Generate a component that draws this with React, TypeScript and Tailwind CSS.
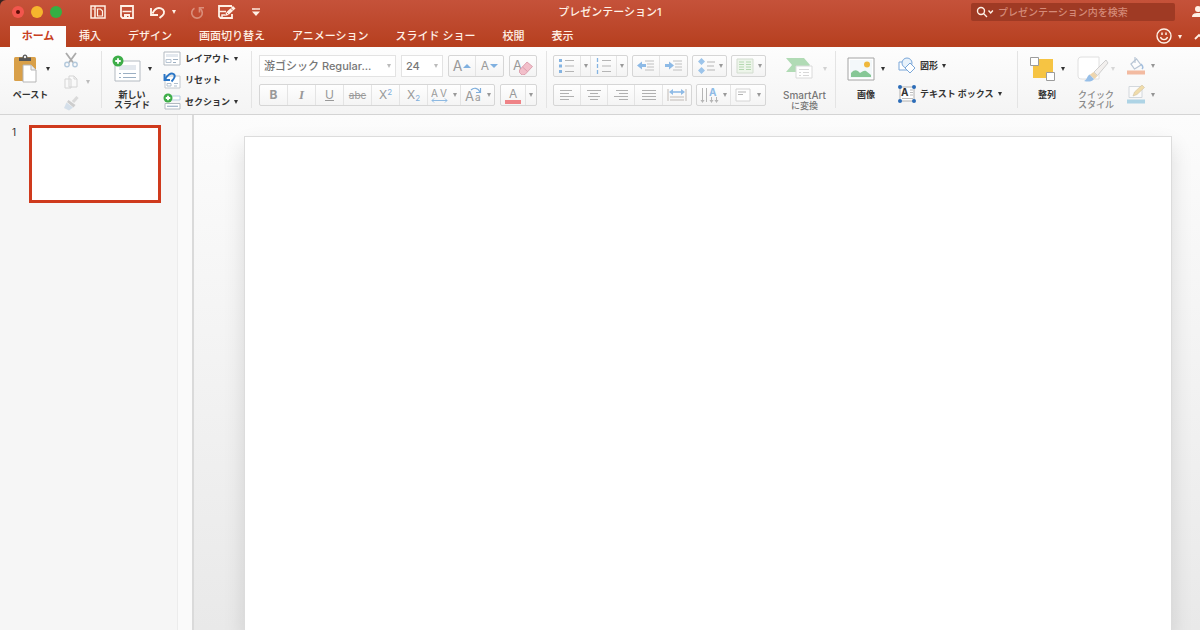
import type { ReactNode } from 'react';
import clsx from 'clsx';

const TABS = ['ホーム', '挿入', 'デザイン', '画面切り替え', 'アニメーション', 'スライド ショー', '校閲', '表示'];

export default function App() {
  return (
    <div className="min-h-screen flex flex-col overflow-hidden bg-[#3a2420] font-['Inter','Noto_Sans_CJK_JP',sans-serif] text-[#333]">
      <header className="rounded-tl-md overflow-hidden bg-linear-to-b from-[#c5523a] to-[#b63f1e]">
        <TitleBar />
        <TabBar />
      </header>
      <Ribbon />
      <main className="flex-1 flex">
        <SlideList />
        <div className="w-[17px] shrink-0 border-l border-r-2 border-l-[#ececec] border-r-[#dadada] bg-[#fafafa]" />
        <section
          aria-label="スライド"
          className="flex-1 flex pl-[50px] pr-7 pt-[21px] bg-linear-to-b from-[#fcfcfc] to-[#e9e9e9] overflow-hidden"
        >
          <div className="flex-1 bg-white border border-b-0 border-[#dcdcdc] shadow-[0_10px_20px_rgba(0,0,0,0.12)]" />
        </section>
      </main>
    </div>
  );
}

function TitleBar() {
  return (
    <div className="grid grid-cols-[1fr_auto_1fr] items-center h-6 pl-3 text-[#fff1e6]">
      <div className="flex items-center">
        <div className="flex gap-[7px]">
          <button aria-label="閉じる" className="size-3 rounded-full bg-[#f2564d] flex items-center justify-center">
            <span className="size-1 rounded-full bg-[#5c0d08]" />
          </button>
          <button aria-label="しまう" className="size-3 rounded-full bg-[#f6b62d]" />
          <button aria-label="拡大" className="size-3 rounded-full bg-[#35b043]" />
        </div>
        <div className="flex items-center ml-7">
          <button aria-label="テンプレート">
            <Icon w={16} h={16}>
              <path d="M1 2h14v12H1zM5 2v12" fill="none" stroke="currentColor" strokeWidth="1.500" />
              <path d="M7.500 5h3l2 2v5h-5z" fill="none" stroke="currentColor" strokeWidth="1.200" />
              <path d="M2.500 5h1.500" stroke="currentColor" strokeWidth="1.200" />
            </Icon>
          </button>
          <button aria-label="保存" className="ml-[14px]">
            <Icon w={14} h={14}>
              <path d="M1 1h12v12H2.500L1 11.500z" fill="none" stroke="currentColor" strokeWidth="1.800" />
              <path d="M2.500 6.500h9" fill="none" stroke="currentColor" strokeWidth="1.600" />
              <path d="M4 9h6v4H8.500v-2H7v2H4z" fill="currentColor" />
            </Icon>
          </button>
          <button aria-label="元に戻す" className="ml-4">
            <Icon w={16} h={14}>
              <path d="M2.500 8.500C4.500 4 8 2.400 11 3.300c3.500 1.200 4 5 1.500 7.200L9.500 13" fill="none" stroke="currentColor" strokeWidth="1.900" />
              <path d="M1 3v7h7" fill="none" stroke="currentColor" strokeWidth="1.900" />
            </Icon>
          </button>
          <button aria-label="元に戻すの履歴" className="ml-[6px] flex">
            <Caret />
          </button>
          <button aria-label="繰り返す" className="ml-[14px] opacity-40">
            <Icon w={14} h={16}>
              <path d="M4.500 4.200a5.300 5.300 0 1 0 5.500.3" fill="none" stroke="currentColor" strokeWidth="1.600" />
              <path d="M14 3.800H9.500V8.500" fill="none" stroke="currentColor" strokeWidth="1.600" />
            </Icon>
          </button>
          <button aria-label="名前を付けて保存" className="ml-[14px]">
            <Icon w={18} h={16}>
              <path d="M14 10v4H2.500L1 12.500V2h13" fill="none" stroke="currentColor" strokeWidth="1.800" />
              <path d="M1 7.500h7M4 14v-3h3" fill="none" stroke="currentColor" strokeWidth="1.500" />
              <path d="m7 12 1-3.500L15 2l2.500 2.500L10.500 11z" fill="currentColor" />
              <path d="m12.500 4 2.500 2.500M8.500 8.500l2 2" stroke="#c04a30" strokeWidth="0.800" />
            </Icon>
          </button>
          <button aria-label="クイック アクセスのカスタマイズ" className="ml-4">
            <Icon w={8} h={8}>
              <path d="M0 1h8" stroke="currentColor" strokeWidth="1.400" />
              <path d="M0 3.500h8L4 8z" fill="currentColor" />
            </Icon>
          </button>
        </div>
      </div>
      <h1 className="pl-2 text-[11px] font-medium whitespace-nowrap">プレゼンテーション1</h1>
      <div className="flex items-center justify-end gap-4 -mr-2">
        <div className="flex items-center w-[204px] h-[18px] pl-1 rounded-xs bg-[#9f3a24]">
          <Icon w={20} h={12}>
            <circle cx="6" cy="5" r="3.500" fill="none" stroke="currentColor" strokeWidth="1.400" />
            <path d="m8.500 7.500 3.500 3.500M13.500 4.500 15.700 7l2.200-2.500" fill="none" stroke="currentColor" strokeWidth="1.400" />
          </Icon>
          <input
            type="search"
            aria-label="検索"
            placeholder="プレゼンテーション内を検索"
            className="flex-1 min-w-0 pl-[3px] bg-transparent outline-none text-[10px] font-medium placeholder:text-[#d58a78]"
          />
        </div>
        <button aria-label="共有" className="-mr-[1px]">
          <Icon w={18} h={14}>
            <circle cx="7" cy="4" r="3" fill="currentColor" />
            <path d="M1 12c0-3.500 3-4 6-4s6 .5 6 4z" fill="currentColor" />
          </Icon>
        </button>
      </div>
    </div>
  );
}

function TabBar() {
  return (
    <nav className="flex items-end h-[23px] pl-[10px] text-[11px] font-medium text-[#fff1e6] leading-[21px]">
      {TABS.map((tab, i) => (
        <button
          key={tab}
          className={clsx('h-[21px] whitespace-nowrap', i === 0 ? 'w-14 mr-[13px] bg-[#fdfdfd] text-[#c8401f] font-bold' : 'mr-[27px]')}
        >
          {tab}
        </button>
      ))}
      <button aria-label="フィードバック" className="ml-auto flex items-center gap-[5px] h-[21px]">
        <Icon w={18} h={18}>
          <circle cx="9" cy="8" r="7" fill="none" stroke="currentColor" strokeWidth="1.400" />
          <path d="M5.500 9c.8 3.400 6.200 3.400 7 0" fill="none" stroke="currentColor" strokeWidth="1.300" />
          <path d="M7 4.500v2.500M11 4.500v2.500" stroke="currentColor" strokeWidth="1.500" />
        </Icon>
        <Caret />
      </button>
      <button aria-label="リボンを折りたたむ" className="ml-3 -mr-1 h-[21px] flex items-center">
        <Icon w={10} h={8}>
          <path d="m1 6 4-4 4 4" fill="none" stroke="currentColor" strokeWidth="1.800" />
        </Icon>
      </button>
    </nav>
  );
}

function Ribbon() {
  return (
    <div className="flex items-stretch h-[68px] bg-linear-to-b from-[#fdfdfd] to-[#f4f4f4] border-b border-[#d4d4d4] text-[9px] font-bold leading-[10px] whitespace-nowrap">
      <Group className="w-[102px] pl-[11px]">
        <BigButton label="ペースト" icon={<PasteIcon />} className="w-[39px]" />
        <div className="flex flex-col gap-[6px] pt-[5px] ml-[13px] opacity-60">
          <button aria-label="切り取り"><CutIcon /></button>
          <button aria-label="コピー" className="flex items-center gap-[7px] opacity-50">
            <Icon w={16} h={16}>
              <path d="M2 5h6v9H2zM6 2h5l3 3v8H6z" fill="#fff" stroke="#888" />
              <path d="M11 2v3h3" fill="none" stroke="#888" />
            </Icon>
            <Caret />
          </button>
          <button aria-label="書式のコピー" className="opacity-70">
            <Icon w={16} h={15}>
              <path d="M14.500 1 10 6" stroke="#b5b5b5" strokeWidth="3" />
              <path d="m5.500 4 7 5-2 2.500L4 6z" fill="#999" />
              <path d="M3.500 6.500 10 11.500 6 14.500 1 12z" fill="#a9c4dc" />
            </Icon>
          </button>
        </div>
      </Group>

      <Group className="w-[150px] pl-[10px]">
        <BigButton label={<>新しい<br />スライド</>} icon={<NewSlideIcon />} className="w-10" />
        <div className="flex flex-col justify-between pt-1 pb-1 ml-[11px]">
          <RowButton label="レイアウト" icon={<LayoutIcon />} caret />
          <RowButton label="リセット" icon={<ResetIcon />} />
          <RowButton label="セクション" icon={<SectionIcon />} caret />
        </div>
      </Group>

      <Group className="w-[295px] pl-[7px]">
        <div className="flex flex-col gap-[7px] pt-2 text-[#999] font-normal">
          <div className="flex gap-[5px]">
            <Picker label="フォント" value="游ゴシック Regular..." className="w-[137px]" />
            <Picker label="フォント サイズ" value="24" className="w-[42px]" />
            <Cells>
              <Cell label="フォント サイズの拡大" className="w-[27px] gap-[1px]"><span className="text-[14px]">A</span><Tri up /></Cell>
              <Cell label="フォント サイズの縮小" className="w-[27px] gap-[1px]"><span className="text-[12px]">A</span><Tri /></Cell>
            </Cells>
            <Cells>
              <Cell label="書式のクリア" className="w-[26px]">
                <Icon w={22} h={18}>
                  <text x="1" y="13" fontSize="13" fill="#999">A</text>
                  <path d="m7.500 13 7.500-8 5.500 4.500-7.500 8-3 .5-2.500-2.500z" fill="#f2bfca" stroke="#d794a4" strokeWidth="0.800" />
                  <path d="m10.500 10 5 4.500" stroke="#d794a4" strokeWidth="0.800" />
                </Icon>
              </Cell>
            </Cells>
          </div>
          <div className="flex gap-[5px] text-[12px]">
            <Cells>
              <Cell label="太字"><span className="font-bold">B</span></Cell>
              <Cell label="斜体"><span className="font-['Liberation_Serif',serif] font-bold italic text-[13px]">I</span></Cell>
              <Cell label="下線"><span className="underline">U</span></Cell>
              <Cell label="取り消し線"><span className="line-through text-[10px]">abc</span></Cell>
              <Cell label="上付き"><span>X<sup className="text-[8px] text-[#7eaedc]">2</sup></span></Cell>
              <Cell label="下付き"><span>X<sub className="text-[8px] text-[#7eaedc]">2</sub></span></Cell>
              <Cell label="文字の間隔" className="w-[33px]">
                <Icon w={18} h={16}>
                  <text x="0" y="10" fontSize="10" fill="#999">A</text>
                  <text x="9" y="10" fontSize="10" fill="#999">V</text>
                  <path d="M1 13.500h15M3 11.500l-2 2 2 2M14 11.500l2 2-2 2" fill="none" stroke="#8db9e2" />
                </Icon>
                <Caret className="ml-1" />
              </Cell>
              <Cell label="文字種の変換" className="w-[33px]">
                <Icon w={18} h={18}>
                  <text x="0" y="15" fontSize="13" fill="#999">A</text>
                  <text x="10" y="15" fontSize="10" fill="#999">a</text>
                  <path d="M6 4c3-3 7-2 9 2M15.500 2v4.500H11" fill="none" stroke="#7eaedc" strokeWidth="1.200" />
                </Icon>
                <Caret className="ml-1" />
              </Cell>
            </Cells>
            <Cells>
              <Cell label="フォントの色" className="w-[25px]">
                <Icon w={18} h={20}>
                  <text x="5" y="13" fontSize="12" fill="#999">A</text>
                  <path d="M1 15h16v4H1z" fill="#ef8387" />
                </Icon>
              </Cell>
              <Cell label="フォントの色の一覧" className="w-[10px]"><Caret /></Cell>
            </Cells>
          </div>
        </div>
      </Group>

      <Group className="w-[289px] pl-[6px]">
        <div className="flex flex-col gap-[7px] pt-2 text-[#999] font-normal">
          <div className="flex gap-1">
            <Cells>
              <Cell label="箇条書き" className="w-[27px]"><ListIcon dots /></Cell>
              <Cell label="箇条書きの一覧" className="w-[10px]"><Caret /></Cell>
              <Cell label="段落番号" className="w-[26px]"><ListIcon /></Cell>
              <Cell label="段落番号の一覧" className="w-[10px]"><Caret /></Cell>
            </Cells>
            <Cells>
              <Cell label="インデントを減らす" className="w-[27px]"><IndentIcon left /></Cell>
              <Cell label="インデントを増やす" className="w-[27px]"><IndentIcon /></Cell>
            </Cells>
            <Cells>
              <Cell label="行間" className="w-[33px]">
                <Icon w={18} h={16}>
                  <path d="m4.500 0 3.500 3.500L4.500 7 1 3.500zM4.500 9 8 12.500 4.500 16 1 12.500z" fill="#9cc4ea" />
                  <path d="M10 4h8M10 8h7M10 12h8" stroke="#b5b5b5" />
                </Icon>
                <Caret className="ml-1" />
              </Cell>
            </Cells>
            <Cells>
              <Cell label="段組み" className="w-[33px]">
                <Icon w={18} h={16}>
                  <path d="M1 1h16v14H1z" fill="#edf5ea" stroke="#d3ddd0" />
                  <path d="M3 4h5M3 6.500h5M3 9h5M3 11.500h5M10 4h5M10 6.500h5M10 9h5M10 11.500h5" stroke="#b5d8b0" />
                </Icon>
                <Caret className="ml-1" />
              </Cell>
            </Cells>
          </div>
          <div className="flex gap-1">
            <Cells>
              <Cell label="左揃え" className="w-[27px]"><AlignIcon d="M1 2h12M1 5h9M1 8h14M1 11h9" /></Cell>
              <Cell label="中央揃え" className="w-[27px]"><AlignIcon d="M1 2h14M4 5h8M2 8h12M4 11h8" /></Cell>
              <Cell label="右揃え" className="w-[27px]"><AlignIcon d="M3 2h12M6 5h9M1 8h14M6 11h9" /></Cell>
              <Cell label="両端揃え"><AlignIcon d="M1 2h14M1 5h14M1 8h14M1 11h14" /></Cell>
              <Cell label="均等割り付け">
                <Icon w={20} h={16}>
                  <path d="M1 2v12M19 2v12M3 10h14M3 13h14" stroke="#c0bab5" />
                  <path d="M5 5h10" stroke="#8fbbe6" strokeWidth="1.600" />
                  <path d="m2 5 4-3v6zM18 5l-4-3v6z" fill="#8fbbe6" />
                </Icon>
              </Cell>
            </Cells>
            <Cells>
              <Cell label="文字列の方向" className="w-[34px]">
                <Icon w={20} h={18}>
                  <path d="M2.500 2v14M6.500 2v14M11.500 11v5M16.500 11v5" stroke="#b5b5b5" />
                  <path d="m.5 14 2 3 2-3zM9.500 14l2 3 2-3zM14.500 14l2 3 2-3z" fill="#b5b5b5" />
                  <text x="9" y="10" fontSize="10" fontWeight="bold" fill="#8fbbe6">A</text>
                </Icon>
                <Caret className="ml-[3px]" />
              </Cell>
              <Cell label="文字の配置" className="w-[34px]">
                <Icon w={16} h={14}>
                  <path d="M1 1h14v12H1z" fill="#fff" stroke="#d4d4d4" />
                  <path d="M3 4h8M3 6.500h5" stroke="#b5b5b5" />
                </Icon>
                <Caret className="ml-[6px]" />
              </Cell>
            </Cells>
          </div>
        </div>
        <BigButton
          label={<><span className="text-[10px]">SmartArt</span><br />に変換</>}
          icon={<SmartArtIcon />}
          className="w-[45px] ml-4 text-[#777] font-medium"
          faded
        />
      </Group>

      <Group className="w-[182px] pl-[11px]">
        <BigButton label="画像" icon={<PictureIcon />} className="w-[38px]" />
        <div className="flex flex-col gap-[11px] pt-[10px] ml-[13px]">
          <RowButton label="図形" icon={<ShapesIcon />} caret />
          <RowButton label="テキスト ボックス" icon={<TextBoxIcon />} caret />
        </div>
      </Group>

      <div className="flex pl-[11px]">
        <BigButton label="整列" icon={<ArrangeIcon />} className="w-9" />
        <BigButton
          label={<>クイック<br />スタイル</>}
          icon={<QuickStyleIcon />}
          className="w-[38px] ml-3 text-[#888] font-medium"
          faded
        />
        <div className="flex flex-col gap-[9px] pt-[9px] ml-3 opacity-50">
          <button aria-label="図形の塗りつぶし" className="flex items-center gap-[6px]">
            <Icon w={18} h={20}>
              <path d="m4 8 5.500-5L14 9l-6.500 4z" fill="#fff" stroke="#7792b0" strokeWidth="1.200" />
              <path d="M8 1v6" stroke="#7792b0" strokeWidth="1.200" />
              <path d="M14 8c2 2 2 4 1 5" stroke="#4c84c4" strokeWidth="1.500" fill="none" />
              <path d="M0 14.500h18v4H0z" fill="#ed7d4b" />
            </Icon>
            <Caret />
          </button>
          <button aria-label="図形の枠線" className="flex items-center gap-[6px]">
            <Icon w={18} h={20}>
              <path d="M2 1.500h13v11H2z" fill="#fff" stroke="#b0bac4" />
              <path d="m6 11 1.500-4L15 0l2.500 2.500-7.500 7z" fill="#ebc25f" stroke="#a98f52" strokeWidth="0.600" />
              <path d="M0 14.500h18v4H0z" fill="#69b3d6" />
            </Icon>
            <Caret />
          </button>
        </div>
      </div>
    </div>
  );
}

function SlideList() {
  return (
    <aside className="flex items-start w-[177px] shrink-0 pl-3 pt-[10px] bg-[#f6f6f6]">
      <span className="w-[17px] pt-[1px] text-[10px] leading-3">1</span>
      <button aria-label="スライド 1" className="w-[132px] h-[78px] border-[3px] border-[#cf3a1d] bg-white" />
    </aside>
  );
}

function Group({ className, children }: { className?: string; children: ReactNode }) {
  return (
    <div className={clsx('flex shrink-0', className)}>
      {children}
      <div className="w-px ml-auto mt-1 mb-[6px] bg-[#e4e4e4]" />
    </div>
  );
}

function BigButton({
  label,
  icon,
  className,
  faded
}: {
  label: ReactNode;
  icon: ReactNode;
  className?: string;
  faded?: boolean;
}) {
  return (
    <button className={clsx('flex flex-col items-center pt-[6px] shrink-0', className)}>
      <span className="flex items-center justify-between w-full h-8">
        {icon}
        <Caret className={faded ? 'opacity-30' : undefined} />
      </span>
      <span className="pt-[5px] w-full text-center">{label}</span>
    </button>
  );
}

function RowButton({ label, icon, caret }: { label: string; icon: ReactNode; caret?: boolean }) {
  return (
    <button className="flex items-center gap-1">
      {icon}
      <span>{label}</span>
      {caret && <Caret />}
    </button>
  );
}

function Picker({ label, value, className }: { label: string; value: string; className?: string }) {
  return (
    <div className={clsx('relative flex h-[22px] border border-[#e3e3e3] bg-white', className)}>
      <select
        aria-label={label}
        className="w-full pl-1 appearance-none bg-transparent text-[11px] leading-5 font-medium text-[#777]"
      >
        <option>{value}</option>
      </select>
      <Caret className="absolute right-1 top-2 text-[#bbb]" />
    </div>
  );
}

function Cells({ children }: { children: ReactNode }) {
  return (
    <div className="flex h-[22px] rounded-xs border border-[#d6d6d6] bg-linear-to-b from-[#fefefe] to-[#f4f4f4] divide-x divide-[#e4e4e4]">
      {children}
    </div>
  );
}

function Cell({ label, className, children }: { label: string; className?: string; children: ReactNode }) {
  return (
    <button aria-label={label} className={clsx('flex items-center justify-center', className ?? 'w-[28px]')}>
      {children}
    </button>
  );
}

function Caret({ className }: { className?: string }) {
  return (
    <svg width="4" height="4" viewBox="0 0 4 4" className={clsx('shrink-0', className)}>
      <path d="M0 0h4L2 4z" fill="currentColor" />
    </svg>
  );
}

function Tri({ up }: { up?: boolean }) {
  return (
    <svg width="8" height="4" viewBox="0 0 8 4" className="shrink-0">
      <path d={up ? 'M0 4h8L4 0z' : 'M0 0h8L4 4z'} fill="#7fb0e0" />
    </svg>
  );
}

function Icon({ w, h, children }: { w: number; h: number; children: ReactNode }) {
  return (
    <svg width={w} height={h} viewBox={`0 0 ${w} ${h}`} className="shrink-0">
      {children}
    </svg>
  );
}

function PasteIcon() {
  return (
    <Icon w={28} h={30}>
      <rect x="3" y="3" width="22" height="24" rx="1.500" fill="#d9a049" />
      <path d="M8 7V3.500h3.500c0-4 5-4 5 0H20V7z" fill="#565656" />
      <circle cx="14" cy="3" r="1.200" fill="#eee" />
      <path d="M12 11h8l5 5v12H12z" fill="#fff" stroke="#b5b5b5" />
      <path d="M20 11v5h5" fill="#eee" stroke="#b5b5b5" />
    </Icon>
  );
}

function CutIcon() {
  return (
    <Icon w={16} h={16}>
      <path d="m3 1 7 9.500M13 1 6 10.500" stroke="#777" strokeWidth="1.800" />
      <circle cx="4" cy="12.500" r="2.200" fill="none" stroke="#86a9c9" strokeWidth="1.400" />
      <circle cx="12" cy="12.500" r="2.200" fill="none" stroke="#86a9c9" strokeWidth="1.400" />
    </Icon>
  );
}

function PlusBadge({ x, y, r }: { x: number; y: number; r: number }) {
  return (
    <>
      <circle cx={x} cy={y} r={r} fill="#3eae49" />
      <path d={`M${x - r / 2} ${y}h${r}M${x} ${y - r / 2}v${r}`} stroke="#fff" strokeWidth="1.800" />
    </>
  );
}

function NewSlideIcon() {
  return (
    <Icon w={29} h={28}>
      <path d="M3 6h25v20H3z" fill="#fff" stroke="#b3bac1" />
      <path d="M7 10h17v5H7z" fill="#e3e8ee" />
      <path d="M7 18.500h2M11 18.500h13M7 22.500h2M11 22.500h13" stroke="#9bafc3" strokeWidth="1.200" />
      <PlusBadge x={6} y={6} r={5.5} />
    </Icon>
  );
}

function LayoutIcon() {
  return (
    <Icon w={18} h={15}>
      <path d="M1 1h16v13H1z" fill="#fff" stroke="#b3bac1" />
      <path d="M3 3h12v3H3z" fill="#e3e8ee" />
      <path d="M3 8.500h5v3H3z" fill="none" stroke="#b5c3d2" />
      <path d="M10 8.500h5M10 11.500h3" stroke="#9fb0c2" />
    </Icon>
  );
}

function ResetIcon() {
  return (
    <Icon w={18} h={18}>
      <path d="M2 5h15v12H2z" fill="#fff" stroke="#c2c8ce" />
      <path d="M4 12.500h4v2.500H4zM11 12.500h4M11 15h3" stroke="#b0bfce" fill="none" />
      <path d="M2 8.500c2-4.500 6-7 8.500-5.500 2.600 1.700.7 4.500-2 7.500" fill="none" stroke="#2a76c6" strokeWidth="1.900" />
      <path d="M1.500 3v6H7" fill="none" stroke="#2a76c6" strokeWidth="1.900" />
    </Icon>
  );
}

function SectionIcon() {
  return (
    <Icon w={18} h={17}>
      <path d="M8 3h9v4H8z" fill="#fff" stroke="#b9cde2" />
      <path d="M2 10.500h15v5.500H2z" fill="#fff" stroke="#b3bac1" />
      <path d="M4 13.300h11" stroke="#a5b8cc" strokeWidth="1.300" />
      <PlusBadge x={5} y={5} r={4.5} />
    </Icon>
  );
}

function ListIcon({ dots }: { dots?: boolean }) {
  return (
    <Icon w={18} h={16}>
      {dots ? (
        <path d="M1 1h3v3H1zM1 6.500h3v3H1zM1 12h3v3H1z" fill="#85b4e2" />
      ) : (
        <path d="M2.500 0v4M2.500 6v4M2.500 12v4" stroke="#85b4e2" strokeWidth="1.300" />
      )}
      <path d="M7 2.500h9M7 8h9M7 13.500h9" stroke="#b5b5b5" />
    </Icon>
  );
}

function IndentIcon({ left }: { left?: boolean }) {
  return (
    <Icon w={18} h={14}>
      <path d="M8 2h9M10 5h7M10 8h7M8 11h9" stroke="#c0c0c0" />
      <path d={left ? 'M0 6.500 5 2.500v2.500h4v3H5v2.500z' : 'M9 6.500 4 2.500v2.500H0v3h4v2.500z'} fill="#8dbae6" />
    </Icon>
  );
}

function AlignIcon({ d }: { d: string }) {
  return (
    <Icon w={16} h={14}>
      <g transform="translate(0 .5)">
        <path d={d} stroke="#b0b0b0" />
      </g>
    </Icon>
  );
}

function SmartArtIcon() {
  return (
    <Icon w={32} h={24}>
      <path d="M4 1h18l6 7-6 7H4l6-7z" fill="#b1dbb5" />
      <path d="M14 9h16v12H14z" fill="#fff" stroke="#dadada" />
      <path d="M17 12.500h10M17 15.500h2M21 15.500h6M17 18.500h2M21 18.500h6" stroke="#d8d8d8" />
    </Icon>
  );
}

function PictureIcon() {
  return (
    <Icon w={28} h={24}>
      <path d="M1 1h26v22H1z" fill="#fff" stroke="#a4a4a4" />
      <path d="M3 3h22v18H3z" fill="#f3f8fa" />
      <circle cx="20" cy="7.500" r="3" fill="#efb83c" />
      <path d="M4 20v-4c4-4 6-3 9 0 2-1 4-3 6-2l5 4v2z" fill="#86c796" />
    </Icon>
  );
}

function ShapesIcon() {
  return (
    <Icon w={18} h={17}>
      <path d="M1 5h9v8H1z" fill="#fff" stroke="#7aa7d9" />
      <circle cx="9" cy="6" r="5" fill="#e8f2fb" stroke="#7aa7d9" />
      <path d="m12 6 5 5-5 5-5-5z" fill="#fff" stroke="#7aa7d9" />
    </Icon>
  );
}

function TextBoxIcon() {
  return (
    <Icon w={18} h={18}>
      <path d="M2 2h14v14H2z" fill="#fff" stroke="#b0b0b0" />
      <text x="3" y="11" fontSize="10" fontWeight="bold" fill="#333">A</text>
      <path d="M12 5h3M12 7.500h3M12 10h3M4 13.500h11" stroke="#bbb" />
      <circle cx="2" cy="2" r="2" fill="#2b6cb8" />
      <circle cx="16" cy="2" r="2" fill="#2b6cb8" />
      <circle cx="2" cy="16" r="2" fill="#2b6cb8" />
      <circle cx="16" cy="16" r="2" fill="#2b6cb8" />
    </Icon>
  );
}

function ArrangeIcon() {
  return (
    <Icon w={26} h={26}>
      <path d="M4 3h20v19H4z" fill="#f6c443" />
      <path d="M1.500 1.500h8v8h-8zM17.500 16.500h8v8h-8z" fill="#fff" stroke="#9c9c9c" />
    </Icon>
  );
}

function QuickStyleIcon() {
  return (
    <Icon w={32} h={28}>
      <path d="M1 6c0-3 1-4 4-4h17v22H5c-3 0-4-1-4-4z" fill="#fff" stroke="#e0e0e0" />
      <path d="M29 5 17 17l3.500 3.500L31 8z" fill="#f3f0ee" stroke="#c4c4c4" strokeWidth="0.800" />
      <path d="m16.500 17 4 4-3 3-5-4z" fill="#edd5ae" />
      <path d="M12.500 19.500 17 24c-2 3-6 3-10 2 3-1 3-5 5.500-6.500z" fill="#97bfe8" />
    </Icon>
  );
}
